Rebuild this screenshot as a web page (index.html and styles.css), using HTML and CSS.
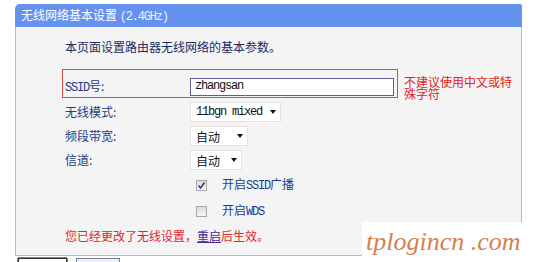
FILE: index.html
```html
<!DOCTYPE html>
<html>
<head>
<meta charset="utf-8">
<title>无线网络基本设置</title>
<link rel="stylesheet" href="styles.css">
</head>
<body>
<div class="page">
  <div class="panel">
    <div class="title">无线网络基本设置 <span class="mono">(2.4GHz)</span></div>
    <div class="body">
      <p class="desc">本页面设置路由器无线网络的基本参数。</p>
      <div class="ssid-row">
        <div class="ssid-box">
          <span class="label"><span class="mono">SSID</span>号:</span>
          <div class="input mono">zhangsan</div>
        </div>
        <div class="note">不建议使用中文或特殊字符</div>
      </div>
      <div class="row">
        <span class="label">无线模式:</span>
        <div class="select s-mode"><span class="mono">11bgn mixed</span><i class="arrow"></i></div>
      </div>
      <div class="row">
        <span class="label">频段带宽:</span>
        <div class="select s-band"><span>自动</span><i class="arrow"></i></div>
      </div>
      <div class="row">
        <span class="label">信道:</span>
        <div class="select s-chan"><span>自动</span><i class="arrow"></i></div>
      </div>
      <div class="check-row">
        <span class="box"><svg width="9" height="9" viewBox="0 0 9 9"><path d="M1.5 4.5 L3.5 7 L7.5 1.5" fill="none" stroke="#2a3f86" stroke-width="1.6"/></svg></span>
        <span class="check-text">开启<span class="mono">SSID</span>广播</span>
      </div>
      <div class="check-row">
        <span class="box"></span>
        <span class="check-text">开启<span class="mono">WDS</span></span>
      </div>
      <p class="msg">您已经更改了无线设置，<a class="reboot">重启</a>后生效。</p>
    </div>
  </div>
  <div class="buttons">
    <span class="btn btn-save"></span>
    <span class="btn btn-help"></span>
  </div>
</div>
<div class="watermark">tplogincn .com</div>
</body>
</html>
```

FILE: styles.css
```css
html, body{margin:0; padding:0; overflow:hidden;}
body{background:#fff; font-family:"Noto Sans CJK SC", "Liberation Sans", sans-serif; font-size:12px; color:#233c86;}
.mono{font-family:"Liberation Mono", "Noto Sans CJK SC", monospace; font-size:12px; letter-spacing:-1.2px;}

.page{padding:4px 0 0 15px;}
.panel{width:507px;}
.title{height:23px; line-height:22px; background:#6492ee; color:#fff; border-radius:5px 2px 0 0; padding-left:6px;}
.title .mono{color:#eef2ff;}
.body{box-sizing:border-box; height:229px; background:#f4f4f4; border:1px solid #eeae6c; border-top:0; padding:13px 0 0 49px;}

.desc{margin:0; line-height:14px; color:#1f2a5e;}

.ssid-row{display:flex; margin-top:15px;}
.ssid-box{box-sizing:border-box; display:flex; align-items:center; width:336px; height:29px; margin-left:-3px; padding:6px 0 0 2px; border:1px solid #e24a4a;}
.label{display:inline-block; width:125px; line-height:14px;}
.input{box-sizing:border-box; width:204px; height:18px; line-height:15px; padding-left:4px; background:#fff; border:1px solid #5e5e96; color:#111;}
.note{width:110px; margin-left:6px; padding-top:7px; line-height:12px; color:#e42020;}

.row{display:flex; align-items:center; height:24px;}
.select{box-sizing:border-box; display:flex; align-items:center; justify-content:space-between; height:20px; padding:0 4px 0 5px; background:#fff; border:1px solid #e2e2e2; color:#111;}
.s-mode{width:91px;}
.s-band{width:58px;}
.s-chan{width:52px;}
.arrow{width:0; height:0; border-left:3px solid transparent; border-right:3px solid transparent; border-top:4px solid #111;}

.check-row{display:flex; align-items:center; height:26px; padding-left:131px;}
.box{box-sizing:border-box; display:flex; align-items:center; justify-content:center; width:11px; height:11px; border:1px solid #a9a9a9; background:linear-gradient(#dcdcdc, #f6f6f6);}
.check-text{margin-left:15px; line-height:14px; color:#1d3c8c;}

.msg{margin:0; height:24px; line-height:24px; color:#e2262b;}
.reboot{color:#3a2a9c; text-decoration:underline;}

.buttons{display:flex; margin-top:2px; padding-left:3px;}
.btn{box-sizing:border-box; display:block; height:5px; border-bottom:0 !important;}
.btn-save{width:49px; border:1px solid #333; box-shadow:0 -1px 0 0 #e06040, -1px 0 0 0 #e06040, 1px 0 0 0 #e06040;}
.btn-help{width:44px; margin-left:9px; border:1px solid #6d7fa8; background:#eef1f8;}

.watermark{position:absolute; left:362px; top:222px; width:174px; height:40px; background:#fff; color:#d6804c; font-family:"Liberation Serif", serif; font-style:italic; font-size:26px; line-height:40px; padding-left:4px; box-sizing:border-box; white-space:pre;}
```
